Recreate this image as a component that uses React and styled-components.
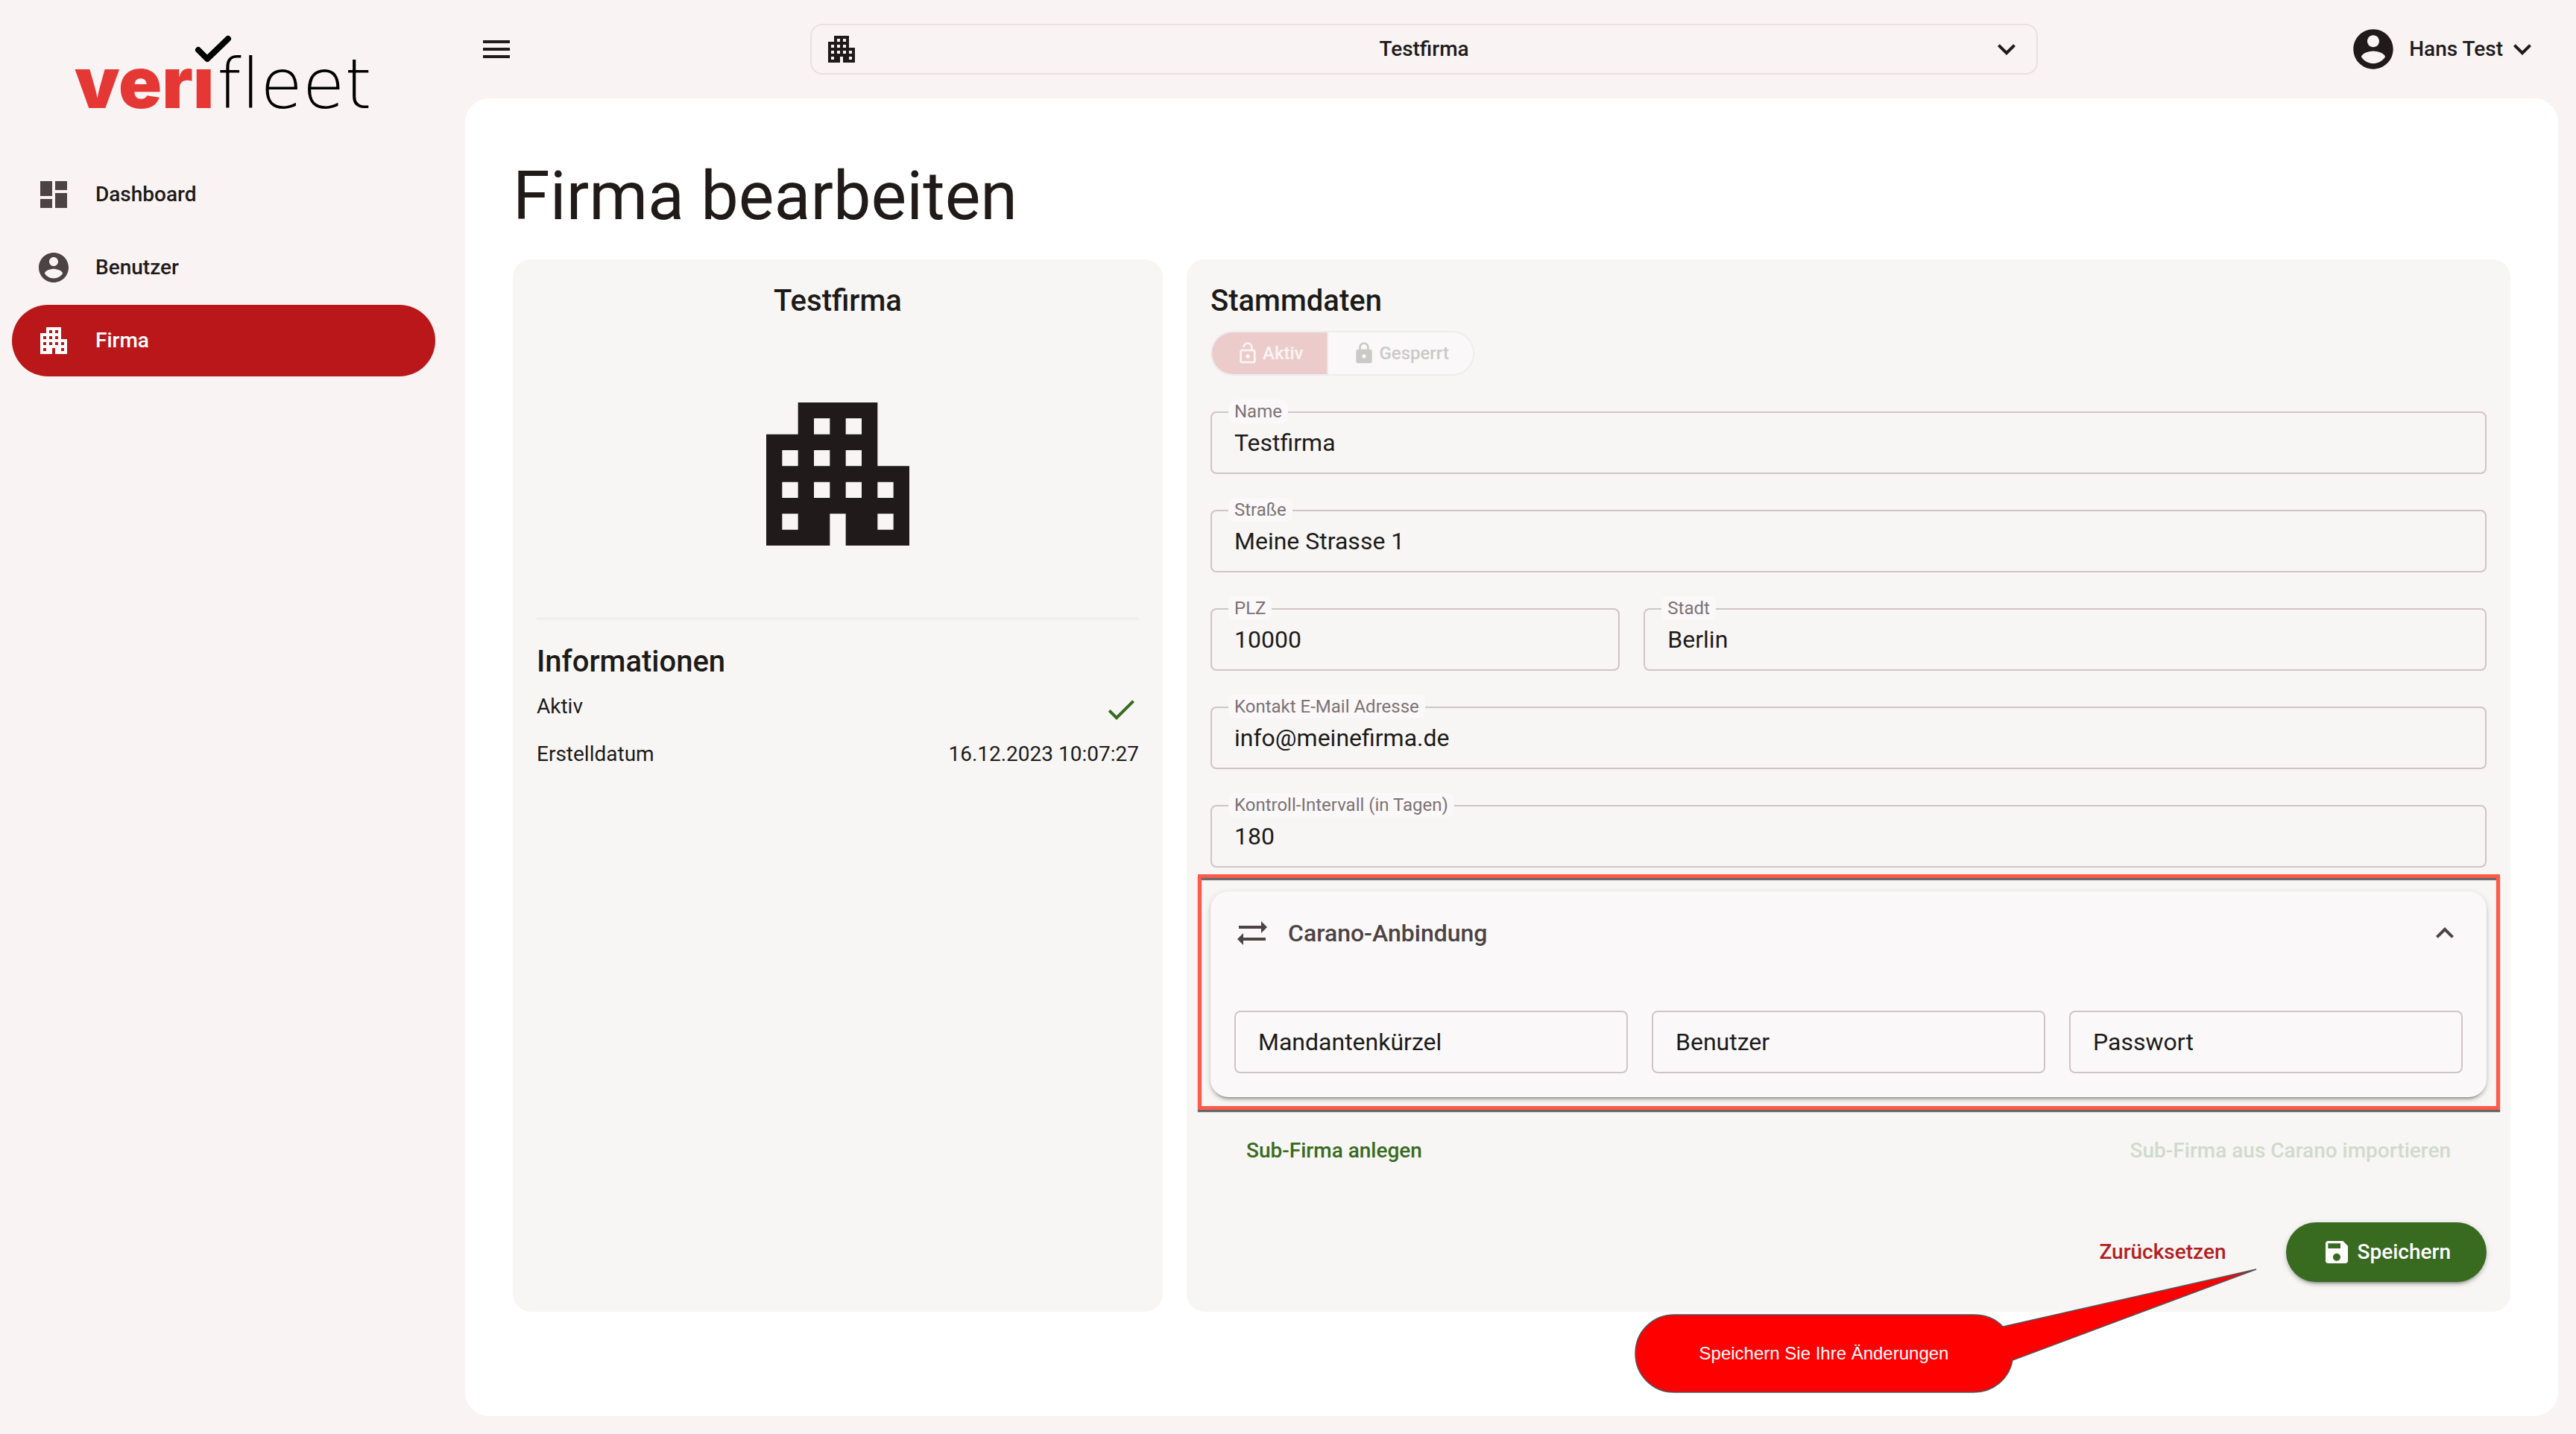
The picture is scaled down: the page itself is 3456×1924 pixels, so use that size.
import React, { useId, useState } from "react";
import styled, { createGlobalStyle } from "styled-components";

const color = {
  page: "#f9f3f3",
  surface: "#ffffff",
  card: "#f7f6f4",
  panel: "#faf8f9",
  text: "#201a1a",
  ink: "#1d1b1a",
  muted: "#4d4344",
  label: "#7d7274",
  outline: "#d1c4c6",
  red: "#ba171a",
  green: "#386a20",
};

const GlobalStyle = createGlobalStyle`
  *, *::before, *::after { box-sizing: border-box; }
  body {
    margin: 0;
    background: ${color.page};
    color: ${color.text};
    font-family: Roboto, "Liberation Sans", sans-serif;
    font-size: 28px;
    line-height: 40px;
  }
  button, input, select { font: inherit; color: inherit; }
  h1, h2, p, dl, dd { margin: 0; }
`;

const icons = {
  menu: "M3 18h18v-2H3v2zm0-5h18v-2H3v2zm0-7v2h18V6H3z",
  dashboard: "M3 13h8V3H3v10zm0 8h8v-6H3v6zm10 0h8V11h-8v10zm0-18v6h8V3h-8z",
  account:
    "M12 2C6.48 2 2 6.48 2 12s4.48 10 10 10 10-4.48 10-10S17.52 2 12 2zm0 3c1.66 0 3 1.34 3 3s-1.34 3-3 3-3-1.34-3-3 1.34-3 3-3zm0 14.2c-2.5 0-4.71-1.28-6-3.22.03-1.99 4-3.08 6-3.08 1.99 0 5.97 1.09 6 3.08-1.29 1.94-3.5 3.22-6 3.22z",
  apartment:
    "M17 11V3H7v4H3v14h8v-4h2v4h8V11h-4zM7 19H5v-2h2v2zm0-4H5v-2h2v2zm0-4H5V9h2v2zm4 4H9v-2h2v2zm0-4H9V9h2v2zm0-4H9V5h2v2zm4 8h-2v-2h2v2zm0-4h-2V9h2v2zm0-4h-2V5h2v2zm4 12h-2v-2h2v2zm0-4h-2v-2h2v2z",
  expandMore: "M16.59 8.59L12 13.17 7.41 8.59 6 10l6 6 6-6z",
  expandLess: "M12 8l-6 6 1.41 1.41L12 10.83l4.59 4.58L18 14z",
  check: "M9 16.17L4.83 12l-1.42 1.41L9 19 21 7l-1.41-1.41z",
  lockOpen:
    "M12 17c1.1 0 2-.9 2-2s-.9-2-2-2-2 .9-2 2 .9 2 2 2zm6-9h-1V6c0-2.76-2.24-5-5-5S7 3.24 7 6h1.9c0-1.71 1.39-3.1 3.1-3.1s3.1 1.39 3.1 3.1v2H6c-1.1 0-2 .9-2 2v10c0 1.1.9 2 2 2h12c1.1 0 2-.9 2-2V10c0-1.1-.9-2-2-2zm0 12H6V10h12v10z",
  lock:
    "M18 8h-1V6c0-2.76-2.24-5-5-5S7 3.24 7 6v2H6c-1.1 0-2 .9-2 2v10c0 1.1.9 2 2 2h12c1.1 0 2-.9 2-2V10c0-1.1-.9-2-2-2zm-6 9c-1.1 0-2-.9-2-2s.9-2 2-2 2 .9 2 2-.9 2-2 2zm3.1-9H8.9V6c0-1.71 1.39-3.1 3.1-3.1 1.71 0 3.1 1.39 3.1 3.1v2z",
  syncAlt: "M22 8l-4-4v3H3v2h15v3l4-4zM2 16l4 4v-3h15v-2H6v-3l-4 4z",
  save:
    "M17 3H5c-1.11 0-2 .9-2 2v14c0 1.1.89 2 2 2h14c1.1 0 2-.9 2-2V7l-4-4zm-5 16c-1.66 0-3-1.34-3-3s1.34-3 3-3 3 1.34 3 3-1.34 3-3 3zm3-10H5V5h10v4z",
};

const Svg = styled.svg`
  display: block;
  flex: none;
  width: ${(p) => p.$size}px;
  height: ${(p) => p.$size}px;
  fill: currentColor;
`;

const Icon = ({ name, size = 48 }) => (
  <Svg $size={size} viewBox="0 0 24 24" aria-hidden="true">
    <path d={icons[name]} />
  </Svg>
);

/* ---------- shell ---------- */

const Page = styled.div`
  display: flex;
  min-height: 100vh;
`;

const Sidebar = styled.aside`
  flex: none;
  width: 624px;
  padding: 36px 40px 0 16px;
`;

const Logo = styled.a`
  position: relative;
  display: flex;
  align-items: baseline;
  gap: 4px;
  height: 177px;
  padding: 14px 0 0 84px;
  line-height: 120px;
  color: #000;
  text-decoration: none;
`;

const LogoBold = styled.span`
  font-family: Inter, Roboto, sans-serif;
  font-size: 96px;
  font-weight: 900;
  color: #e53835;
`;

const LogoLight = styled.span`
  font-family: "DejaVu Sans", "DejaVu Sans Light", Inter, sans-serif;
  font-size: 92px;
  font-weight: 200;
  font-variant-ligatures: none;
`;

const LogoCheck = styled.svg`
  position: absolute;
  left: 244px;
  top: 10px;
  width: 52px;
  height: 40px;
  fill: none;
  stroke: #000;
  stroke-width: 8;
  stroke-linecap: round;
  stroke-linejoin: round;
`;

const Nav = styled.nav`
  display: grid;
  gap: 2px;
`;

const NavLink = styled.a`
  display: flex;
  align-items: center;
  gap: 32px;
  height: 96px;
  padding: 0 32px;
  border-radius: 48px;
  font-weight: 500;
  text-decoration: none;
  color: ${(p) => (p.$active ? "#fff" : color.text)};
  background: ${(p) => (p.$active ? color.red : "transparent")};

  svg {
    color: ${(p) => (p.$active ? "#fff" : color.muted)};
  }
`;

const Main = styled.main`
  display: flex;
  flex: 1;
  flex-direction: column;
  min-width: 0;
  padding: 0 24px 24px 0;
`;

const Header = styled.header`
  display: grid;
  grid-template-columns: 445px minmax(0, 1fr) 674px;
  align-items: center;
  height: 132px;
  padding: 0 24px 0 18px;
`;

const PlainButton = styled.button`
  display: flex;
  align-items: center;
  padding: 0;
  border: 0;
  background: none;
  font-weight: 500;
  cursor: pointer;
`;

const UserButton = styled(PlainButton)`
  justify-self: end;
`;

const UserName = styled.span`
  margin: 0 2px 0 16px;
`;

const CompanyPicker = styled.div`
  position: relative;
`;

const CompanySelect = styled.select`
  display: block;
  width: 100%;
  height: 68px;
  padding: 0 64px;
  border: 2px solid #ecdfe0;
  border-radius: 16px;
  background: transparent;
  appearance: none;
  font-weight: 500;
  text-align: center;
  text-align-last: center;
`;

const PickerIcon = styled.span`
  position: absolute;
  top: 10px;
  ${(p) => p.$side}: 18px;
  pointer-events: none;
`;

const Surface = styled.div`
  position: relative;
  flex: 1;
  padding: 80px 64px 140px;
  border-radius: 32px;
  background: ${color.surface};
`;

const PageTitle = styled.h1`
  margin-bottom: 32px;
  font-size: 90px;
  line-height: 104px;
  font-weight: 400;
`;

const Columns = styled.div`
  display: grid;
  grid-template-columns: repeat(12, minmax(0, 1fr));
  column-gap: 32px;
`;

const Card = styled.section`
  grid-column: span ${(p) => p.$span};
  padding: 32px 32px 40px;
  border-radius: 24px;
  background: ${color.card};
  color: ${color.ink};
`;

const CardTitle = styled.h2`
  font-size: 40px;
  line-height: 48px;
  font-weight: 500;
  text-align: ${(p) => (p.$centered ? "center" : "left")};
`;

/* ---------- summary card ---------- */

const CompanyEmblem = styled.div`
  display: flex;
  justify-content: center;
  margin-bottom: 32px;
  padding: 80px 0 64px;
  border-bottom: 4px solid #f1efee;
  color: ${color.text};
`;

const Facts = styled.dl`
  display: grid;
  gap: 16px;
  margin-top: 16px;
`;

const Fact = styled.div`
  display: flex;
  justify-content: space-between;
`;

const ActiveMark = styled.dd`
  color: ${color.green};
`;

/* ---------- form ---------- */

const StatusToggle = styled.div`
  display: inline-flex;
  height: 60px;
  margin: 16px 0 48px;
  border: 2px solid #eeecec;
  border-radius: 30px;
  overflow: hidden;
  vertical-align: top;
`;

const StatusOption = styled.button`
  display: flex;
  align-items: center;
  gap: 4px;
  padding: 0 32px;
  border: 0;
  font-size: 24px;
  font-weight: 500;
  color: ${(p) => (p.$on ? "#fbf5f4" : "#cbc9c8")};
  background: ${(p) => (p.$on ? "#eccccb" : color.panel)};

  & + & {
    border-left: 2px solid #e9e6e6;
  }
`;

const Fields = styled.div`
  display: grid;
  grid-template-columns: repeat(12, minmax(0, 1fr));
  gap: 48px 32px;
`;

const FieldBox = styled.div`
  position: relative;
  grid-column: span ${(p) => p.$span};
`;

const FieldInput = styled.input`
  display: block;
  width: 100%;
  height: 84px;
  padding: 0 30px;
  border: 2px solid ${color.outline};
  border-radius: 8px;
  outline: none;
  background: transparent;
  font-size: 32px;
`;

const FieldLabel = styled.label`
  position: absolute;
  left: 24px;
  top: ${(p) => (p.$raised ? "-16px" : "18px")};
  padding: 0 8px;
  border-radius: 8px;
  font-size: ${(p) => (p.$raised ? 24 : 32)}px;
  line-height: ${(p) => (p.$raised ? 32 : 48)}px;
  color: ${(p) => (p.$raised ? color.label : color.ink)};
  background: ${color.panel};
`;

const Field = ({ label, initial = "", type = "text", span = 12 }) => {
  const id = useId();
  const [value, setValue] = useState(initial);
  return (
    <FieldBox $span={span}>
      <FieldInput id={id} type={type} value={value} onChange={(e) => setValue(e.target.value)} />
      <FieldLabel htmlFor={id} $raised={value !== ""}>
        {label}
      </FieldLabel>
    </FieldBox>
  );
};

const Expansion = styled.div`
  position: relative;
  margin-top: 32px;
  border-radius: 24px;
  background: ${color.panel};
  box-shadow: 0 6px 2px -4px rgba(0, 0, 0, 0.2), 0 4px 4px rgba(0, 0, 0, 0.14),
    0 2px 10px rgba(0, 0, 0, 0.12);
`;

const ExpansionHeader = styled(PlainButton)`
  width: 100%;
  height: 112px;
  padding: 0 32px;
  font-size: 32px;
  color: ${color.muted};
`;

const ExpansionTitle = styled.span`
  flex: 1;
  margin-left: 24px;
  text-align: left;
`;

const ExpansionBody = styled.div`
  padding: 48px 32px 32px;
`;

const Highlight = styled.div`
  position: absolute;
  inset: -23px -18px -17px -17px;
  border: 5px solid #ff5a4c;
  box-shadow: 0 3px 1px #666, inset 0 3px 1px #666;
  pointer-events: none;
`;

const Actions = styled.div`
  display: flex;
  justify-content: ${(p) => p.$justify};
  gap: 32px;
  margin-top: ${(p) => p.$top}px;
`;

const ActionButton = styled(PlainButton)`
  gap: 8px;
  height: 80px;
  padding: 0 48px;
  border-radius: 40px;
  color: ${(p) => p.$color};
`;

const SaveButton = styled(ActionButton)`
  background: ${color.green};
  box-shadow: 0 6px 2px -4px rgba(0, 0, 0, 0.2), 0 4px 4px rgba(0, 0, 0, 0.14),
    0 2px 10px rgba(0, 0, 0, 0.12);
`;

/* ---------- hint bubble ---------- */

const Hint = styled.div`
  position: absolute;
  right: 402px;
  bottom: 28px;
  width: 840px;
  height: 172px;
  pointer-events: none;
`;

const HintShape = styled.svg`
  display: block;
  width: 100%;
  height: 100%;
  fill: #ff0000;
  stroke: #50565c;
  stroke-width: 1.5;
`;

const HintText = styled.p`
  position: absolute;
  left: 4px;
  bottom: 40px;
  width: 506px;
  font-family: "Liberation Sans", Arial, sans-serif;
  font-size: 24px;
  line-height: 32px;
  text-align: center;
  color: #fff;
`;

export default function App() {
  return (
    <>
      <GlobalStyle />
      <Page>
        <Sidebar>
          <Logo href="#" aria-label="verifleet">
            <LogoBold>verı</LogoBold>
            <LogoLight>fleet</LogoLight>
            <LogoCheck viewBox="260 46 52 40" aria-hidden="true">
              <path d="M266 67l12 12 28-27" />
            </LogoCheck>
          </Logo>
          <Nav>
            <NavLink href="#dashboard">
              <Icon name="dashboard" />
              Dashboard
            </NavLink>
            <NavLink href="#benutzer">
              <Icon name="account" />
              Benutzer
            </NavLink>
            <NavLink href="#firma" $active aria-current="page">
              <Icon name="apartment" />
              Firma
            </NavLink>
          </Nav>
        </Sidebar>

        <Main>
          <Header>
            <PlainButton type="button" aria-label="Menü">
              <Icon name="menu" />
            </PlainButton>
            <CompanyPicker>
              <CompanySelect aria-label="Firma" defaultValue="Testfirma">
                <option>Testfirma</option>
              </CompanySelect>
              <PickerIcon $side="left">
                <Icon name="apartment" />
              </PickerIcon>
              <PickerIcon $side="right">
                <Icon name="expandMore" />
              </PickerIcon>
            </CompanyPicker>
            <UserButton type="button">
              <Icon name="account" size={64} />
              <UserName>Hans Test</UserName>
              <Icon name="expandMore" />
            </UserButton>
          </Header>

          <Surface>
            <PageTitle>Firma bearbeiten</PageTitle>
            <Columns>
              <Card $span={4}>
                <CardTitle $centered>Testfirma</CardTitle>
                <CompanyEmblem>
                  <Icon name="apartment" size={256} />
                </CompanyEmblem>
                <CardTitle>Informationen</CardTitle>
                <Facts>
                  <Fact>
                    <dt>Aktiv</dt>
                    <ActiveMark aria-label="Ja">
                      <Icon name="check" />
                    </ActiveMark>
                  </Fact>
                  <Fact>
                    <dt>Erstelldatum</dt>
                    <dd>16.12.2023 10:07:27</dd>
                  </Fact>
                </Facts>
              </Card>

              <Card as="form" $span={8} onSubmit={(e) => e.preventDefault()}>
                <CardTitle>Stammdaten</CardTitle>
                <StatusToggle role="group" aria-label="Status">
                  <StatusOption type="button" disabled aria-pressed="true" $on>
                    <Icon name="lockOpen" size={32} />
                    Aktiv
                  </StatusOption>
                  <StatusOption type="button" disabled aria-pressed="false">
                    <Icon name="lock" size={32} />
                    Gesperrt
                  </StatusOption>
                </StatusToggle>

                <Fields>
                  <Field label="Name" initial="Testfirma" />
                  <Field label="Straße" initial="Meine Strasse 1" />
                  <Field label="PLZ" initial="10000" span={4} />
                  <Field label="Stadt" initial="Berlin" span={8} />
                  <Field label="Kontakt E-Mail Adresse" initial="info@meinefirma.de" />
                  <Field label="Kontroll-Intervall (in Tagen)" initial="180" />
                </Fields>

                <Expansion>
                  <ExpansionHeader type="button" aria-expanded="true">
                    <Icon name="syncAlt" />
                    <ExpansionTitle>Carano-Anbindung</ExpansionTitle>
                    <Icon name="expandLess" />
                  </ExpansionHeader>
                  <ExpansionBody>
                    <Fields>
                      <Field label="Mandantenkürzel" span={4} />
                      <Field label="Benutzer" span={4} />
                      <Field label="Passwort" type="password" span={4} />
                    </Fields>
                  </ExpansionBody>
                  <Highlight />
                </Expansion>

                <Actions $justify="space-between" $top={32}>
                  <ActionButton type="button" $color={color.green}>
                    Sub-Firma anlegen
                  </ActionButton>
                  <ActionButton type="button" disabled $color="#d0dacb">
                    Sub-Firma aus Carano importieren
                  </ActionButton>
                </Actions>
                <Actions $justify="flex-end" $top={56}>
                  <ActionButton type="reset" $color="#b3201f">
                    Zurücksetzen
                  </ActionButton>
                  <SaveButton type="submit" $color="#fff">
                    <Icon name="save" size={40} />
                    Speichern
                  </SaveButton>
                </Actions>
              </Card>
            </Columns>

            <Hint role="note">
              <HintShape viewBox="0 0 840 172" aria-hidden="true">
                <path d="M56 64H458C474 64 488 70 497 80L837 3L510 125C506 150 484 168 458 168H56C27 168 4 145 4 116S27 64 56 64Z" />
              </HintShape>
              <HintText>Speichern Sie Ihre Änderungen</HintText>
            </Hint>
          </Surface>
        </Main>
      </Page>
    </>
  );
}
